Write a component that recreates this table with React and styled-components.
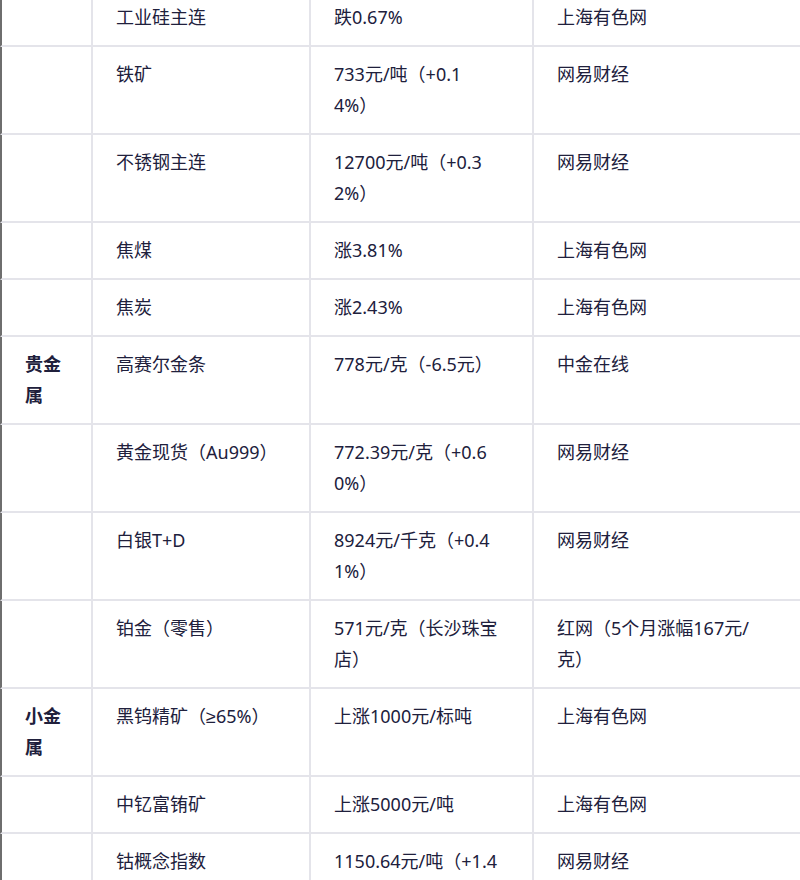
import React from "react";
import styled, { createGlobalStyle } from "styled-components";

const GlobalStyle = createGlobalStyle`
  html, body {
    margin: 0;
    padding: 0;
    background: #ffffff;
    overflow: hidden;
  }
  body {
    font-family: "Noto Sans", "Liberation Sans", "Noto Sans CJK SC", sans-serif;
  }
`;

const Page = styled.div`
  width: 800px;
  height: 880px;
  overflow: hidden;
  background: #ffffff;
`;

const Table = styled.table`
  margin-top: -10px;
  border-collapse: separate;
  border-spacing: 0;
  table-layout: fixed;
  width: 834px;
  font-family: "Noto Sans", "Liberation Sans", "Noto Sans CJK SC", sans-serif;
  font-size: 18px;
  line-height: 31px;
  color: #20203c;
`;

const Col = styled.col`
  width: ${(p) => p.$w}px;
`;

const Cell = styled.td`
  box-sizing: border-box;
  vertical-align: top;
  padding: 12px 24px 12px 23px;
  border-right: 2px solid #e4e4ea;
  border-bottom: 2px solid #e4e4ea;
  word-break: break-all;
  font-weight: ${(p) => (p.$category ? 700 : 400)};

  &:first-child {
    border-left: 2px solid #6e6e6e;
  }
`;

const Line = styled.span`
  display: block;
`;

const rows = [
  ["", "工业硅主连", "跌0.67%", "上海有色网"],
  ["", "铁矿", ["733元/吨（+0.1", "4%）"], "网易财经"],
  ["", "不锈钢主连", ["12700元/吨（+0.3", "2%）"], "网易财经"],
  ["", "焦煤", "涨3.81%", "上海有色网"],
  ["", "焦炭", "涨2.43%", "上海有色网"],
  ["贵金属", "高赛尔金条", "778元/克（-6.5元）", "中金在线"],
  ["", "黄金现货（Au999）", ["772.39元/克（+0.6", "0%）"], "网易财经"],
  ["", "白银T+D", ["8924元/千克（+0.4", "1%）"], "网易财经"],
  ["", "铂金（零售）", ["571元/克（长沙珠宝", "店）"], ["红网（5个月涨幅167元/", "克）"]],
  ["小金属", "黑钨精矿（≥65%）", "上涨1000元/标吨", "上海有色网"],
  ["", "中钇富铕矿", "上涨5000元/吨", "上海有色网"],
  ["", "钴概念指数", ["1150.64元/吨（+1.4", "2%）"], "网易财经"],
];

const Content = ({ value }) =>
  Array.isArray(value) ? value.map((l, i) => <Line key={i}>{l}</Line>) : value;

export default function App() {
  return (
    <>
      <GlobalStyle />
      <Page>
        <Table>
          <colgroup>
            <Col $w={93} />
            <Col $w={218} />
            <Col $w={223} />
            <Col $w={300} />
          </colgroup>
          <tbody>
            {rows.map((r, i) => (
              <tr key={i}>
                <Cell $category>{r[0]}</Cell>
                <Cell><Content value={r[1]} /></Cell>
                <Cell><Content value={r[2]} /></Cell>
                <Cell><Content value={r[3]} /></Cell>
              </tr>
            ))}
          </tbody>
        </Table>
      </Page>
    </>
  );
}
